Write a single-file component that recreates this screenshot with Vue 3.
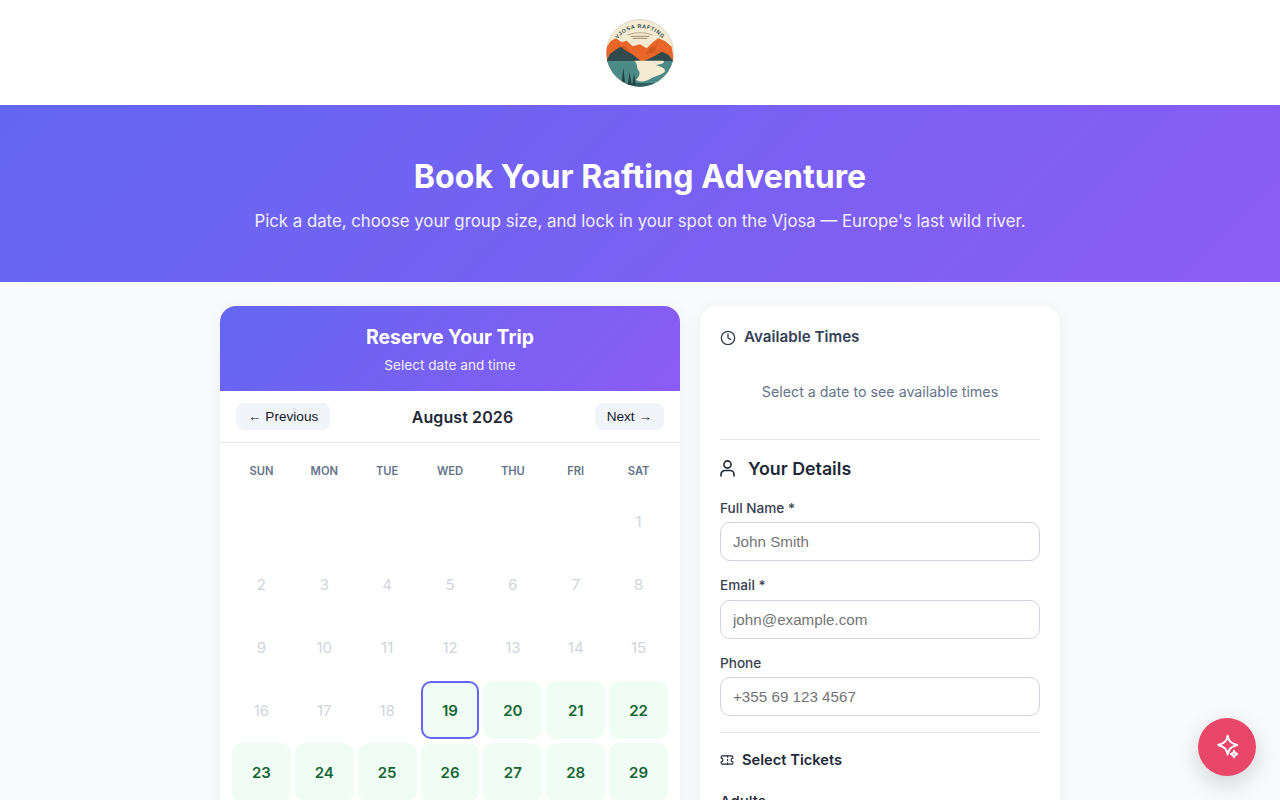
<template>
  <div class="page">
    <header class="topbar">
      <svg class="logo" viewBox="48 42 204 204" width="68" height="68">
        <defs>
          <clipPath id="disc"><circle cx="150" cy="144" r="101" /></clipPath>
          <path id="arc" d="M72 120 A85 85 0 0 1 228 120" />
        </defs>
        <g clip-path="url(#disc)">
          <rect x="48" y="42" width="204" height="204" fill="#f4ebd2" />
          <path d="M48 130 L62 108 L78 100 L95 112 L110 107 L128 124 L150 118 L170 130 L188 112 L205 100 L225 108 L245 125 L252 170 H48 Z" fill="#e9652a" />
          <path d="M78 100 L90 125 L104 122 L122 146 L100 142 Z M205 100 L198 124 L180 128 L168 148 L195 142 Z" fill="#cf5a22" />
          <path d="M48 172 L60 146 L75 136 L92 125 L105 136 L125 146 L152 168 L130 172 Z" fill="#2f4b4e" />
          <path d="M252 172 L236 150 L216 140 L200 150 L180 160 L162 168 L175 172 Z" fill="#2f4b4e" />
          <rect x="48" y="168" width="204" height="78" fill="#4b8a86" />
          <path d="M132 167 H218 C230 172 216 177 196 180 C222 186 232 196 220 204 C208 212 192 214 176 224 C160 232 146 230 138 224 C150 212 152 204 144 194 C138 184 144 174 132 167 Z" fill="#f4ebd2" />
          <path d="M60 234 H240 V246 H60 Z" fill="#2f5f60" />
          <path d="M94 240 L100 188 L106 240 Z M113 240 L119 200 L125 240 Z M127 240 L132 204 L137 240 Z" fill="#24403f" />
        </g>
        <text class="logo-text"><textPath href="#arc" startOffset="50%" text-anchor="middle">VJOSA RAFTING</textPath></text>
        <path d="M112 90 Q150 76 188 90" fill="none" stroke="#7a6a4a" stroke-width="1.5" />
        <path d="M122 94 H178 M128 100 H172" stroke="#8a7a5a" stroke-width="2.5" />
        <circle cx="150" cy="144" r="101" fill="none" stroke="#3d5a58" stroke-width="1" opacity="0.5" />
      </svg>
    </header>

    <section class="hero">
      <h1>Book Your Rafting Adventure</h1>
      <p>Pick a date, choose your group size, and lock in your spot on the Vjosa — Europe's last wild river.</p>
    </section>

    <main class="layout">
      <section class="calendar">
        <div class="calendar-head">
          <h2>Reserve Your Trip</h2>
          <p>Select date and time</p>
        </div>
        <div class="month-nav">
          <button type="button">← Previous</button>
          <strong>August 2026</strong>
          <button type="button">Next →</button>
        </div>
        <div class="grid">
          <div v-for="d in weekdays" :key="d" class="weekday">{{ d }}</div>
          <div v-for="n in 6" :key="'e' + n" class="day"></div>
          <div
            v-for="n in 31"
            :key="n"
            class="day"
            :class="{ open: n >= 19, selected: n === 19, past: n < 19 }"
          >{{ n }}</div>
        </div>
      </section>

      <aside class="side">
        <h3 class="times-title">
          <svg viewBox="0 0 24 24" width="16" height="16" class="ico clock">
            <circle cx="12" cy="12" r="10" />
            <path d="M12 6v6l4 2" />
          </svg>
          Available Times
        </h3>
        <p class="hint">Select a date to see available times</p>
        <hr />
        <h3 class="details-title">
          <svg viewBox="0 0 15 17" width="15" height="17" class="ico person">
            <circle cx="7.5" cy="4.5" r="3.6" />
            <path d="M1 16v-1.5A4 4 0 0 1 5 10.5h5a4 4 0 0 1 4 4V16" />
          </svg>
          Your Details
        </h3>
        <label>Full Name *</label>
        <input type="text" placeholder="John Smith" />
        <label>Email *</label>
        <input type="email" placeholder="john@example.com" />
        <label>Phone</label>
        <input type="tel" placeholder="+355 69 123 4567" />
        <hr class="tight" />
        <h3 class="tickets-title">
          <svg viewBox="0 0 24 24" width="14" height="14" class="ico">
            <path d="M2 9a3 3 0 0 1 0 6v2a2 2 0 0 0 2 2h16a2 2 0 0 0 2-2v-2a3 3 0 0 1 0-6V7a2 2 0 0 0-2-2H4a2 2 0 0 0-2 2Z" />
            <path d="M13 5v2M13 17v2M13 11v2" />
          </svg>
          Select Tickets
        </h3>
        <div class="ticket">Adults</div>
      </aside>
    </main>

    <button class="fab" type="button" aria-label="Assistant">
      <svg viewBox="0 0 24 24" width="26" height="26">
        <path d="M12.6 1.5 C13.5 6.5 15.2 8.4 21.3 10.2 C15.2 12 13.5 13.9 12.6 18.9 C11.7 13.9 10 12 3.9 10.2 C10 8.4 11.7 6.5 12.6 1.5 Z" />
        <path d="M18.5 15.5 C18.8 17.3 19.4 17.9 21.5 18.5 C19.4 19.1 18.8 19.7 18.5 21.5 C18.2 19.7 17.6 19.1 15.5 18.5 C17.6 17.9 18.2 17.3 18.5 15.5 Z" />
      </svg>
    </button>
  </div>
</template>

<script setup>
const weekdays = ['SUN', 'MON', 'TUE', 'WED', 'THU', 'FRI', 'SAT']
</script>

<style>
html, body {
  background: #f8fafc;
}
</style>

<style scoped>
.page {
  font-family: Inter, "Liberation Sans", sans-serif;
  background: #f8fafc;
  color: #1f2937;
  min-height: 100vh;
}

.topbar {
  height: 105px;
  box-sizing: border-box;
  background: #fff;
  display: flex;
  align-items: center;
  justify-content: center;
  padding-top: 1px;
}

.logo-text {
  font: 700 16px "Liberation Sans", sans-serif;
  letter-spacing: 2px;
  fill: #2e4a4c;
}

.hero {
  height: 177px;
  box-sizing: border-box;
  padding-top: 48px;
  text-align: center;
  color: #fff;
  background: linear-gradient(135deg, #6366f1, #8b5cf6);
}

.hero h1 {
  margin: 0 0 8px;
  font-size: 32px;
  line-height: 48px;
  font-weight: 700;
  letter-spacing: 0.1px;
}

.hero p {
  margin: 0;
  font-size: 16.8px;
  line-height: 25px;
  opacity: 0.9;
}

.layout {
  width: 840px;
  margin: 0 auto;
  padding: 24px 0 40px;
  display: grid;
  grid-template-columns: 460px 360px;
  gap: 20px;
  align-items: start;
}

.calendar {
  background: #fff;
  border-radius: 16px;
  overflow: hidden;
  box-shadow: 0 4px 20px rgba(0, 0, 0, 0.05);
}

.calendar-head {
  height: 85px;
  box-sizing: border-box;
  padding-top: 19px;
  text-align: center;
  color: #fff;
  background: linear-gradient(135deg, #6366f1, #8b5cf6);
}

.calendar-head h2 {
  margin: 0 0 6px;
  font-size: 19.4px;
  line-height: 24px;
  font-weight: 700;
}

.calendar-head p {
  margin: 0;
  font-size: 13.6px;
  line-height: 20px;
  opacity: 0.9;
}

.month-nav {
  height: 52px;
  box-sizing: border-box;
  padding: 0 16px;
  display: flex;
  align-items: center;
  justify-content: space-between;
  border-bottom: 1px solid #e5e7eb;
}

.month-nav button {
  padding: 6px 12px;
  height: 27px;
  border: none;
  border-radius: 8px;
  background: #f1f5f9;
  color: #111827;
  font-family: "Liberation Sans", sans-serif;
  font-size: 13.6px;
}

.month-nav strong {
  font-size: 16px;
  font-weight: 600;
  letter-spacing: 0.1px;
}

.grid {
  padding: 16px 12px;
  display: grid;
  grid-template-columns: repeat(7, 1fr);
  gap: 4px;
}

.weekday {
  height: 24px;
  margin-bottom: 5px;
  display: flex;
  align-items: center;
  justify-content: center;
  font-size: 11.2px;
  font-weight: 600;
  color: #64748b;
}

.day {
  aspect-ratio: 1;
  box-sizing: border-box;
  display: flex;
  align-items: center;
  justify-content: center;
  border-radius: 10px;
  font-size: 15px;
}

.past {
  color: #d1d5db;
}

.open {
  background: #f0fdf4;
  color: #166534;
  font-weight: 600;
}

.selected {
  border: 2px solid #6366f1;
}

.side {
  background: #fff;
  border-radius: 16px;
  padding: 20px;
  box-shadow: 0 4px 20px rgba(0, 0, 0, 0.05);
}

.side h3 {
  margin: 0;
  display: flex;
  align-items: center;
}

.ico {
  fill: none;
  stroke: currentColor;
  stroke-width: 2;
  stroke-linecap: round;
  stroke-linejoin: round;
  flex: none;
}

.clock {
  margin-top: 2px;
}

.person {
  stroke-width: 1.6;
}

.times-title {
  gap: 8px;
  height: 21px;
  font-size: 15.2px;
  font-weight: 600;
  color: #334155;
}

.hint {
  margin: 0;
  padding: 34px 0 22px;
  text-align: center;
  font-size: 14.25px;
  line-height: 22px;
  color: #64748b;
}

.side hr {
  margin: 14px 0 16px;
  border: none;
  border-top: 1px solid #e5e7eb;
}

.details-title {
  gap: 13px;
  height: 25px;
  font-size: 17.8px;
  font-weight: 600;
}

.side label {
  display: block;
  margin: 14.3px 0 4.2px;
  font-size: 13.6px;
  line-height: 20px;
  font-weight: 500;
  color: #374151;
}

.side label:first-of-type {
  margin-top: 17px;
}

.side input {
  display: block;
  width: 100%;
  height: 39px;
  box-sizing: border-box;
  padding: 0 12px;
  border: 1px solid #d1d5db;
  border-radius: 10px;
  font-family: "Liberation Sans", sans-serif;
  font-size: 15.2px;
}

.side hr.tight {
  margin: 16px 0;
}

.tickets-title {
  gap: 8px;
  height: 22px;
  font-size: 14.7px;
  font-weight: 600;
  color: #1f2937;
}

.ticket {
  margin-top: 21px;
  font-size: 15px;
  font-weight: 500;
}

.fab {
  position: fixed;
  right: 24px;
  bottom: 24px;
  width: 58px;
  height: 58px;
  border: none;
  border-radius: 50%;
  padding: 0;
  display: flex;
  align-items: center;
  justify-content: center;
  background: #e8476a;
  box-shadow: 0 8px 24px rgba(0, 0, 0, 0.16);
}

.fab path {
  fill: none;
  stroke: #fff;
  stroke-width: 1.8;
  stroke-linejoin: round;
}
</style>
